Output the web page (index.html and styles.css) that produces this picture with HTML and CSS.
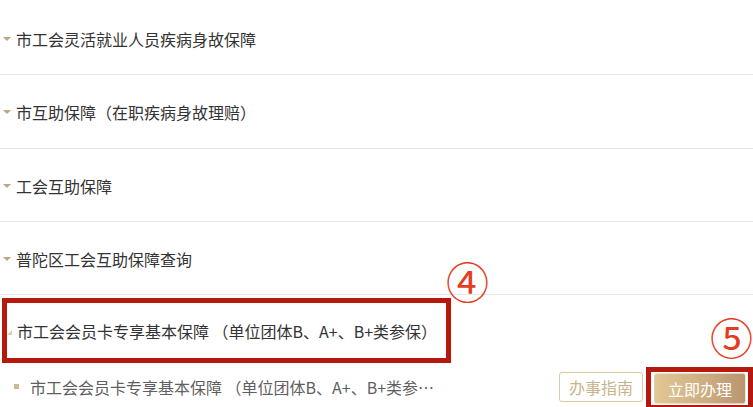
FILE: index.html
```html
<!DOCTYPE html>
<html lang="zh-CN">
<head>
<meta charset="utf-8">
<title>保障列表</title>
<link rel="stylesheet" href="styles.css">
</head>
<body>
<div class="list">
  <div class="item"><span class="caret"></span><span class="title">市工会灵活就业人员疾病身故保障</span></div>
  <div class="item"><span class="caret"></span><span class="title">市互助保障（在职疾病身故理赔）</span></div>
  <div class="item"><span class="caret"></span><span class="title">工会互助保障</span></div>
  <div class="item"><span class="caret"></span><span class="title">普陀区工会互助保障查询</span></div>
  <div class="group">
    <div class="group-head mark"><span class="caret caret-open"></span><span class="title">市工会会员卡专享基本保障 （单位团体B、A+、B+类参保）</span></div>
    <div class="sub">
      <span class="dot"></span>
      <span class="sub-text">市工会会员卡专享基本保障 （单位团体B、A+、B+类参保）</span>
      <div class="actions">
        <button class="btn ghost">办事指南</button>
        <div class="mark mark-btn"><button class="btn primary">立即办理</button></div>
      </div>
    </div>
  </div>
  <span class="badge badge-4">④</span>
  <span class="badge badge-5">⑤</span>
</div>
</body>
</html>
```
FILE: styles.css
```css
html, body {
  margin: 0;
  padding: 0;
  overflow: hidden;
  background: #fff;
}
body {
  font-family: "Noto Sans CJK SC", "Noto Sans", sans-serif;
  font-size: 16px;
  color: #333;
}
.list {
  position: relative;
  padding-top: 2px;
}
.item {
  display: flex;
  align-items: center;
  box-sizing: border-box;
  height: 73.3px;
  padding: 2px 0 0 3px;
  border-bottom: 1px solid #e6e6e6;
}
.caret {
  width: 0;
  height: 0;
  border-left: 4.5px solid transparent;
  border-right: 4.5px solid transparent;
  border-top: 4px solid #bda680;
  margin-right: 5px;
  flex: none;
}
.title {
  line-height: 20px;
  white-space: nowrap;
}
.mark {
  border: 5px solid #b6180d;
  box-sizing: border-box;
}
.group-head {
  display: flex;
  align-items: center;
  width: 449px;
  height: 65px;
  margin: 3px 0 0 2px;
  padding: 0;
}
.caret-open {
  border-left: 5px solid transparent;
  border-right: 0;
  border-top: 0;
  border-bottom: 5px solid #dccdb0;
  margin-top: 4px;
  margin-right: 5px;
}
.sub {
  display: flex;
  align-items: flex-start;
  height: 40px;
  margin-top: 4px;
  padding-left: 14px;
}
.dot {
  flex: none;
  width: 5px;
  height: 5px;
  margin-top: 17px;
  background: #cdb88f;
}
.sub-text {
  margin-left: 11px;
  max-width: 410px;
  line-height: 40px;
  color: #5f5f5f;
  white-space: nowrap;
  overflow: hidden;
  text-overflow: ellipsis;
}
.actions {
  margin-left: auto;
  display: flex;
  align-items: flex-start;
  gap: 3px;
}
.btn {
  font-family: inherit;
  font-size: 16px;
  box-sizing: border-box;
  height: 30px;
  padding: 0;
  border-radius: 3px;
  cursor: pointer;
}
.ghost {
  width: 84px;
  margin-top: 5px;
  background: #fff;
  border: 1px solid #dccaa6;
  color: #c9b38c;
}
.mark-btn {
  width: 107px;
  height: 43px;
  padding: 1px 2px 1px 3px;
}
.primary {
  width: 92px;
  height: 31px;
  border: 1px solid rgba(255, 255, 255, 0.55);
  color: #fff;
  background: linear-gradient(90deg, #e2c795 0%, #cfb083 50%, #b9966f 100%);
}
.badge {
  position: absolute;
  font-family: "Noto Sans CJK SC", sans-serif;
  font-size: 43px;
  line-height: 1;
  color: #e43c21;
}
.badge-4 {
  left: 446px;
  top: 259px;
}
.badge-5 {
  left: 710px;
  top: 315px;
}
```
